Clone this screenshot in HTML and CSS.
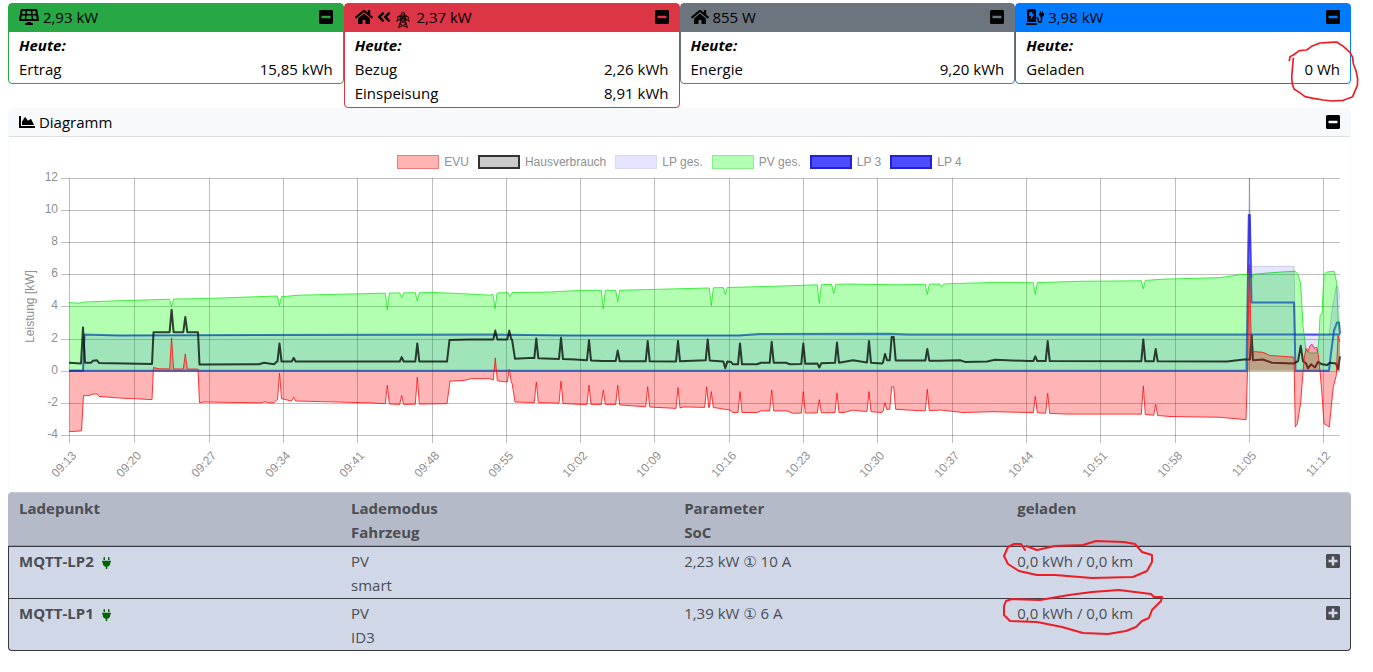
FILE: index.html
```html
<!DOCTYPE html>
<html lang="de">
<head>
    <meta charset="UTF-8">
    <meta name="viewport" content="width=device-width, initial-scale=1.0">
    <title>Energie Übersicht</title>
    <link rel="stylesheet" href="styles.css">
</head>
<body>
    <!-- icon sprites -->
    <svg class="sprites" aria-hidden="true">
        <symbol id="i-minus" viewBox="0 0 448 512"><path d="M400 32H48C21.5 32 0 53.5 0 80v352c0 26.5 21.5 48 48 48h352c26.5 0 48-21.5 48-48V80c0-26.5-21.5-48-48-48zM92 296c-6.6 0-12-5.4-12-12v-56c0-6.6 5.4-12 12-12h264c6.6 0 12 5.4 12 12v56c0 6.6-5.4 12-12 12H92z"/></symbol>
        <symbol id="i-plus" viewBox="0 0 448 512"><path d="M400 32H48C21.5 32 0 53.5 0 80v352c0 26.5 21.5 48 48 48h352c26.5 0 48-21.5 48-48V80c0-26.5-21.5-48-48-48zm-32 252c0 6.6-5.4 12-12 12h-92v92c0 6.6-5.4 12-12 12h-56c-6.6 0-12-5.4-12-12v-92H92c-6.6 0-12-5.4-12-12v-56c0-6.6 5.4-12 12-12h92v-92c0-6.6 5.4-12 12-12h56c6.6 0 12 5.4 12 12v92h92c6.6 0 12 5.4 12 12v56z"/></symbol>
        <symbol id="i-home" viewBox="0 0 576 512"><path d="M280.37 148.26L96 300.11V464a16 16 0 0 0 16 16l112.06-.29a16 16 0 0 0 15.92-16V368a16 16 0 0 1 16-16h64a16 16 0 0 1 16 16v95.64a16 16 0 0 0 16 16.05L464 480a16 16 0 0 0 16-16V300L295.67 148.26a12.19 12.19 0 0 0-15.3 0zM571.6 251.47L488 182.56V44.05a12 12 0 0 0-12-12h-56a12 12 0 0 0-12 12v72.61L318.47 43a48 48 0 0 0-61 0L4.34 251.47a12 12 0 0 0-1.6 16.9l25.5 31A12 12 0 0 0 45.15 301l235.22-193.74a12.19 12.19 0 0 1 15.3 0L530.9 301a12 12 0 0 0 16.9-1.6l25.5-31a12 12 0 0 0-1.7-16.93z"/></symbol>
        <symbol id="i-solar" viewBox="0 0 640 512"><path d="M431.98 448.01l-47.97.05V416h-128v32.21l-47.98.05c-8.82.01-15.97 7.16-15.98 15.99l-.05 31.73c-.01 8.85 7.17 16.03 16.02 16.02l223.96-.26c8.82-.01 15.97-7.16 15.98-15.98l.04-31.73c.01-8.85-7.17-16.03-16.02-16.02zM585.2 26.74C582.58 11.31 568.99 0 553.06 0H86.93C71 0 57.41 11.31 54.79 26.74-3.32 369.16.04 348.08.03 352c-.03 17.32 14.29 32 32.6 32h574.74c18.23 0 32.51-14.56 32.59-31.79.02-4.08 3.35 16.95-54.76-325.47zM259.83 64h120.33l9.77 96H250.06l9.77-96zm-75.17 256H71.09L90.1 208h105.97l-11.41 112zm16.16-160H98.24l16.29-96h96.19l-9.9 96zm32.82 160l11.4-112h149.96l11.4 112H233.64zm195.5-256h96.19l16.29 96H439.17l-10.03-96zm26.06 256l-11.4-112H549.9l19.01 112H455.2z"/></symbol>
        <symbol id="i-left" viewBox="0 0 448 512"><path d="M223.7 239l136-136c9.4-9.4 24.6-9.4 33.9 0l22.6 22.6c9.4 9.4 9.4 24.6 0 33.9L319.9 256l96.4 96.4c9.4 9.4 9.4 24.6 0 33.9L393.7 409c-9.4 9.4-24.6 9.4-33.9 0l-136-136c-9.5-9.4-9.5-24.6-.1-34zm-192 34l136 136c9.4 9.4 24.6 9.4 33.9 0l22.6-22.6c9.4-9.4 9.4-24.6 0-33.9L127.9 256l96.4-96.4c9.4-9.4 9.4-24.6 0-33.9L201.7 103c-9.4-9.4-24.6-9.4-33.9 0l-136 136c-9.5 9.4-9.5 24.6-.1 34z"/></symbol>
        <symbol id="i-tower" viewBox="0 0 16 16"><path fill="none" stroke="currentColor" stroke-width=".9" d="M6 4.500L7 .5h2l1 4M2.500 6.500v-1.500l3.500-2h4l3.500 2v1.500M3 4.800h10M2 10v-2l4-1.500h4l4 1.500v2M2.500 8h11M6 4v4.500L3.500 15.500M10 4v4.500l2.500 7M6 4l4 3.500M10 4L6 7.500M6 8.500l5.500 3.500M10 8.500l-5.500 3.500M4.500 12l8 3.500M11.500 12L3.500 15.500"/></symbol>
        <symbol id="i-station" viewBox="0 0 576 512"><path d="M336 448H16c-8.84 0-16 7.16-16 16v32c0 8.84 7.16 16 16 16h320c8.84 0 16-7.16 16-16v-32c0-8.84-7.16-16-16-16zm208-320V80c0-8.84-7.16-16-16-16s-16 7.16-16 16v48h-32V80c0-8.84-7.16-16-16-16s-16 7.16-16 16v48h-16c-8.84 0-16 7.16-16 16v32c0 35.76 23.62 65.69 56 75.93v118.49c0 13.95-9.5 26.92-23.26 29.19C431.22 402.5 416 387.99 416 370v-28c0-48.6-39.4-88-88-88h-8V64c0-35.35-28.65-64-64-64H96C60.65 0 32 28.65 32 64v352h288V304h8c22.09 0 40 17.91 40 40v24.61c0 39.67 28.92 75.16 68.41 79.01C481.71 452.05 520 416.41 520 372V251.93c32.38-10.24 56-40.17 56-75.93v-32c0-8.84-7.16-16-16-16h-16zm-283.91 47.76l-93.7 139c-2.2 3.33-6.21 5.24-10.39 5.24-7.67 0-13.47-6.28-11.67-12.92L167.35 224H108c-7.25 0-12.85-5.59-11.89-11.89l16-107C112.9 99.9 117.98 96 124 96h68c7.88 0 13.62 6.54 11.6 13.26L192 160h57.7c9.24 0 15.01 8.78 10.39 15.76z"/></symbol>
        <symbol id="i-area" viewBox="0 0 512 512"><path d="M500 384c6.600 0 12 5.400 12 12v40c0 6.600-5.400 12-12 12H12c-6.600 0-12-5.400-12-12V76c0-6.600 5.400-12 12-12h40c6.600 0 12 5.400 12 12v308h436zM372.700 159.500L288 216l-85.300-113.700c-5.100-6.800-15.500-6.300-19.900 1L96 248v104h384l-89.900-187.800c-3.200-6.500-11.400-8.700-17.400-4.700z"/></symbol>
        <symbol id="i-plug" viewBox="0 0 384 512"><path d="M320 32a32 32 0 0 0-64 0v96h64zM368 160H16a16 16 0 0 0-16 16v32a16 16 0 0 0 16 16h16v32a160 160 0 0 0 128 156.800V512h64v-99.200A160 160 0 0 0 352 256v-32h16a16 16 0 0 0 16-16v-32a16 16 0 0 0-16-16zM128 32a32 32 0 0 0-64 0v96h64z"/></symbol>
    </svg>

    <main class="dashboard">
        <div class="cards">
            <section class="card card-pv">
                <div class="card-header">
                    <span><svg class="icon icon-solar"><use href="#i-solar"/></svg> 2,93 kW</span>
                    <button class="toggle" aria-label="PV einklappen"><svg class="icon"><use href="#i-minus"/></svg></button>
                </div>
                <div class="card-body">
                    <div class="today">Heute:</div>
                    <div class="line"><span>Ertrag</span><span>15,85 kWh</span></div>
                </div>
            </section>
            <section class="card card-evu">
                <div class="card-header">
                    <span><svg class="icon icon-wide"><use href="#i-home"/></svg> <svg class="icon"><use href="#i-left"/></svg> <svg class="icon icon-tower"><use href="#i-tower"/></svg> 2,37 kW</span>
                    <button class="toggle" aria-label="EVU einklappen"><svg class="icon"><use href="#i-minus"/></svg></button>
                </div>
                <div class="card-body">
                    <div class="today">Heute:</div>
                    <div class="line"><span>Bezug</span><span>2,26 kWh</span></div>
                    <div class="line"><span>Einspeisung</span><span>8,91 kWh</span></div>
                </div>
            </section>
            <section class="card card-home">
                <div class="card-header">
                    <span><svg class="icon icon-wide"><use href="#i-home"/></svg> 855 W</span>
                    <button class="toggle" aria-label="Hausverbrauch einklappen"><svg class="icon"><use href="#i-minus"/></svg></button>
                </div>
                <div class="card-body">
                    <div class="today">Heute:</div>
                    <div class="line"><span>Energie</span><span>9,20 kWh</span></div>
                </div>
            </section>
            <section class="card card-lp">
                <div class="card-header">
                    <span><svg class="icon icon-wide"><use href="#i-station"/></svg> 3,98 kW</span>
                    <button class="toggle" aria-label="Ladepunkte einklappen"><svg class="icon"><use href="#i-minus"/></svg></button>
                </div>
                <div class="card-body">
                    <div class="today">Heute:</div>
                    <div class="line">
                        <span>Geladen</span>
                        <span class="marked">0 Wh
                            <svg class="mark mark-total" viewBox="834 120 216 192"><path d="M850 178L848 200L845 235L847 255L852 270L868 280L885 293L910 298L940 303L965 306L1000 304L1028 293L1033 280L1042 260L1043 240L1038 215L1030 195L1028 175L1020 160L1000 142L980 129L960 130L930 132L905 142L890 153L868 155L850 168L840 173L838 185"/></svg>
                        </span>
                    </div>
                </div>
            </section>
        </div>

        <section class="card card-chart">
            <div class="card-header">
                <span><svg class="icon icon-area"><use href="#i-area"/></svg> Diagramm</span>
                <button class="toggle" aria-label="Diagramm einklappen"><svg class="icon"><use href="#i-minus"/></svg></button>
            </div>
            <ul class="legend">
                <li><i class="swatch swatch-evu"></i>EVU</li>
                <li><i class="swatch swatch-home"></i>Hausverbrauch</li>
                <li><i class="swatch swatch-total"></i>LP ges.</li>
                <li><i class="swatch swatch-pv"></i>PV ges.</li>
                <li><i class="swatch swatch-lp"></i>LP 3</li>
                <li><i class="swatch swatch-lp"></i>LP 4</li>
            </ul>
            <svg class="chart" id="chart" viewBox="0 0 1341 322"></svg>
        </section>

        <table class="points">
            <thead>
                <tr>
                    <th>Ladepunkt</th>
                    <th>Lademodus<br>Fahrzeug</th>
                    <th>Parameter<br>SoC</th>
                    <th>geladen</th>
                </tr>
            </thead>
            <tbody>
                <tr>
                    <td><b>MQTT-LP2</b> <svg class="icon icon-plug"><use href="#i-plug"/></svg></td>
                    <td>PV<br>smart</td>
                    <td>2,23 kW ① 10 A</td>
                    <td>
                        <div class="line">
                            <span class="marked">0,0 kWh / 0,0 km
                                <svg class="mark mark-row" viewBox="0 0 168 50"><path d="M25 15L21 9L14 9L8 12L4 21L8 29L19 36L37 40L55 40L92 43L133 42L147 36L152 27L152 20L142 17L135 9L124 7L96 6L83 10L55 11L37 15L26 11"/></svg>
                            </span>
                            <button class="toggle" aria-label="MQTT-LP2 ausklappen"><svg class="icon"><use href="#i-plus"/></svg></button>
                        </div>
                    </td>
                </tr>
                <tr>
                    <td><b>MQTT-LP1</b> <svg class="icon icon-plug"><use href="#i-plug"/></svg></td>
                    <td>PV<br>ID3</td>
                    <td>1,39 kW ① 6 A</td>
                    <td>
                        <div class="line">
                            <span class="marked">0,0 kWh / 0,0 km
                                <svg class="mark mark-row" viewBox="0 0 168 50"><path d="M40 13L12 12L6 14L4 19L4 28L10 34L37 35L62 40L83 46L108 47L126 44L136 40L142 34L149 31L152 23L161 14L162 10L154 10L151 7L119 3L92 5L69 8L40 13"/></svg>
                            </span>
                            <button class="toggle" aria-label="MQTT-LP1 ausklappen"><svg class="icon"><use href="#i-plus"/></svg></button>
                        </div>
                    </td>
                </tr>
            </tbody>
        </table>
    </main>

    <script src="chart.js"></script>
</body>
</html>
```
FILE: styles.css
```css
* {
    box-sizing: border-box;
}

body {
    margin: 0;
    background-color: #fff;
    color: #000;
    font-family: "Open Sans", "DejaVu Sans", sans-serif;
    font-size: 15px;
    line-height: 24px;
}

.dashboard {
    padding: 3px 22px 20px 8px;
}

.sprites {
    display: none;
}

/* Icons */
.icon {
    width: 14px;
    height: 16px;
    fill: currentColor;
    vertical-align: -2px;
}

.icon-solar {
    width: 20px;
}

.icon-wide {
    width: 18px;
}

.icon-area {
    width: 16px;
}

.icon-tower {
    width: 16px;
    margin-right: 2px;
    vertical-align: -5px;
}

.icon-plug {
    width: 9px;
    height: 12px;
    margin-left: 4px;
    color: #006400;
}

.toggle {
    display: flex;
    align-items: center;
    padding: 0;
    border: none;
    background: none;
    color: inherit;
    cursor: pointer;
}

/* Cards */
.cards {
    display: grid;
    grid-template-columns: repeat(4, 1fr);
    align-items: start;
}

.card {
    border: 1px solid;
    border-radius: 4px;
}

.card-header {
    display: flex;
    justify-content: space-between;
    padding: 1px 10px 3px;
}

.card-body {
    padding: 1px 10px 2px;
}

.card-pv {
    border-color: #28a745;
}

.card-pv .card-header {
    background-color: #28a745;
}

.card-evu {
    border-color: #dc3545;
}

.card-evu .card-header {
    background-color: #dc3545;
}

.card-home {
    border-color: #6c757d;
}

.card-home .card-header {
    background-color: #6c757d;
}

.card-lp {
    border-color: #007bff;
}

.card-lp .card-header {
    background-color: #007bff;
}

.today {
    font-weight: bold;
    font-style: italic;
}

.line {
    display: flex;
    justify-content: space-between;
    height: 24px;
}

/* Red marker strokes over the values */
.marked {
    position: relative;
}

.mark {
    position: absolute;
    fill: none;
    stroke: #ed1c24;
    stroke-width: 2;
    stroke-linejoin: round;
    stroke-linecap: round;
    pointer-events: none;
}

.mark-total {
    right: -20px;
    top: -18px;
    width: 72px;
    height: 64px;
    stroke-width: 5;
}

.mark-row {
    left: -17px;
    top: -14px;
    width: 168px;
    height: 50px;
}

/* Diagram */
.card-chart {
    border-color: #f8f9fa;
}

.card-chart .card-header {
    padding-bottom: 2px;
    background-color: #f8f9fa;
    border-bottom: 1px solid #dfdfdf;
}

.legend {
    display: flex;
    justify-content: center;
    gap: 9px;
    margin: 0;
    padding: 18px 0 0;
    list-style: none;
    color: #8f8f8f;
    font-family: "Liberation Sans", Arial, sans-serif;
    font-size: 12px;
    line-height: 14px;
}

.legend li {
    display: flex;
    gap: 5px;
}

.swatch {
    width: 42px;
    height: 14px;
    border: 1px solid;
}

.swatch-evu {
    background-color: #ffb3b3;
    border-color: #f27878;
}

.swatch-home {
    background-color: #cbcbcb;
    border: 2px solid #333;
}

.swatch-total {
    background-color: #e5e5ff;
    border-color: #d9d9f2;
}

.swatch-pv {
    background-color: #b3ffb3;
    border-color: #8af08a;
}

.swatch-lp {
    background-color: #4d4dff;
    border: 2px solid #2222d4;
}

.chart {
    display: block;
    width: 100%;
    font-family: "Liberation Sans", Arial, sans-serif;
    font-size: 12px;
}

.chart text {
    fill: #8f8f8f;
    text-anchor: end;
}

.chart .axis-title {
    text-anchor: middle;
}

.grid {
    fill: none;
    stroke: #000;
    stroke-opacity: 0.25;
    shape-rendering: crispEdges;
}

.series {
    fill: none;
    stroke-linejoin: round;
}

.series-lp {
    stroke: #0000ff;
    stroke-opacity: 0.7;
    stroke-width: 2;
}

.series-pv {
    stroke: #00e600;
    stroke-opacity: 0.7;
}

.series-total {
    stroke: #00005a;
    stroke-opacity: 0.15;
}

.series-home {
    stroke: #000;
    stroke-opacity: 0.75;
    stroke-width: 2;
}

.series-evu {
    stroke: #ff0a0d;
    stroke-opacity: 0.8;
}

.area-pv {
    fill: #00ff00;
    fill-opacity: 0.3;
}

.area-total {
    fill: #0000ff;
    fill-opacity: 0.1;
}

.area-evu {
    fill: #ff0a0d;
    fill-opacity: 0.3;
}

/* Charge points */
.points {
    width: 100%;
    border-collapse: separate;
    border-spacing: 0;
    table-layout: fixed;
    color: #4b4d52;
}

.points th,
.points td {
    padding: 2px 10px 1px;
    text-align: left;
    vertical-align: top;
}

.points th {
    padding-top: 3px;
    background-color: #b5bac9;
    border-top: 1px solid #c4c8d3;
    border-bottom: 1px solid #999da6;
}

.points th:not(:last-child) {
    width: 24.8%;
}

.points td {
    background-color: #d0d8e8;
    border-bottom: 1px solid #343a40;
}

.points tbody tr:first-child td {
    border-top: 1px solid #343a40;
}

.points td:first-child {
    border-left: 1px solid #343a40;
}

.points td:last-child {
    border-right: 1px solid #343a40;
}

.points th:first-child {
    border-top-left-radius: 4px;
    padding-left: 11px;
}

.points th:last-child {
    border-top-right-radius: 4px;
}

.points tr:last-child td:first-child {
    border-bottom-left-radius: 4px;
}

.points tr:last-child td:last-child {
    border-bottom-right-radius: 4px;
}
```
FILE: chart.js
```js
const svg = document.getElementById('chart');

// Plot area inside the svg
const left = 60;
const right = 1331;
const top12 = 9;
const perKw = 16.06;
const zero = top12 + 12 * perKw;

const times = ['09:13', '09:20', '09:27', '09:34', '09:41', '09:48', '09:55', '10:02', '10:09',
    '10:16', '10:23', '10:30', '10:37', '10:44', '10:51', '10:58', '11:05', '11:12'];

// Base curves as [x, kW]
const pv = [[0, 4.25], [10, 4.2], [15, 4.28], [45, 4.35], [98, 4.45], [140, 4.5], [208, 4.65], [215, 4.62], [230, 4.7],
    [315, 4.83], [365, 4.87], [400, 4.78], [421, 4.7], [430, 4.85], [481, 4.9], [511, 5], [548, 5], [638, 5.15],
    [700, 5.25], [748, 5.35], [778, 5.4], [831, 5.35], [870, 5.4], [924, 5.5], [966, 5.48], [1011, 5.57], [1071, 5.6],
    [1094, 5.7], [1151, 5.8], [1173, 6], [1180, 6], [1182, 5.6], [1184, 6], [1201, 6.1], [1226, 6.2], [1229, 6],
    [1231.7, 5.4], [1234, 2.8], [1236.7, 1.4], [1238, 1.2], [1242, 1.1], [1246, 1.1], [1248.7, 1.2], [1250, 2],
    [1251, 3.4], [1253, 3.6], [1255, 6], [1258, 6.15], [1265, 6.2], [1267.7, 5.5], [1269.3, 3], [1271, 2.2]];
const pvSpikes = [[102.6, 4], [210.5, 4.05], [318.3, 3.8], [332.7, 4.55], [348.3, 4.35], [426, 3.85], [441, 4.6],
    [534.3, 3.85], [548.7, 4.3], [642.3, 4.05], [656.3, 4.75], [750.3, 4.2], [764.7, 4.8], [858.3, 4.75],
    [872.7, 5.2], [966.3, 4.75], [1074.3, 5.1]];

const evu = [[0, -3.8], [12.5, -3.75], [14.5, -1.55], [20, -1.55], [24, -1.45], [28, -1.45], [30, -1.6], [50, -1.7],
    [83, -1.8], [84.5, 0.2], [90, 0.12], [129, 0.1], [130.5, -2], [135, -1.95], [192, -2], [196, -1.93], [200, -2],
    [205, -2], [208, -1.8], [213, -1.75], [222, -1.88], [300, -2], [330, -2.1], [378, -2.05], [381, -0.65], [395, -0.6],
    [402, -0.5], [421, -0.5], [425, -0.6], [443, -0.75], [446, -1.95], [481, -2], [511, -2.1], [545, -2.1],
    [578, -2.25], [609, -2.35], [615, -2.25], [646, -2.3], [661, -2.45], [664, -2.6], [688, -2.6], [692, -2.5],
    [718, -2.5], [724, -2.65], [775, -2.6], [784, -2.45], [790, -2.5], [812, -2.6], [819, -2.4], [827, -2.4],
    [854, -2.5], [872, -2.45], [894, -2.6], [924, -2.55], [960, -2.6], [998, -2.7], [1071, -2.7], [1101, -2.85],
    [1151, -2.9], [1177, -3.05], [1178.5, 0], [1180.3, 6.6], [1182.5, 1.2], [1194, 1.15], [1201, 0.95],
    [1225, 0.85], [1226.3, -3.5], [1228.3, -3.3], [1231.7, -2], [1233.7, -0.3], [1235.3, 0.8], [1237, 1.4],
    [1239, 1.2], [1241, 1.55], [1243, 1.65], [1245.3, 1.4], [1247.7, 1.45], [1249.3, 1], [1251, 0], [1253, -1.5],
    [1255, -3.3], [1257.7, -3.4], [1260.3, -3.5], [1262.3, -2.2], [1264.3, -1], [1267.3, -0.3], [1269, 2.2], [1271, 1.8]];
const evuSpikes = [[102.6, 2.05], [116.3, 1.05], [210.5, -0.15], [224.7, -1.65], [318.3, -0.9], [332.7, -1.55],
    [348.3, -0.4], [426.3, 0.8], [440.3, 0.1], [467.3, -0.7], [492, -0.65], [520, -0.9], [534.3, -1.2],
    [548.7, -0.9], [578.7, -1], [609, -1.05], [637.7, -1], [642.3, -1.3], [671, -1.3], [702.7, -1.2], [734.3, -1.3],
    [750.3, -1.8], [768, -1.4], [800, -1.3], [816, -2], [823.7, -1, 1], [858.3, -1.15], [966.3, -1.6],
    [978.7, -1.4], [1074.3, -0.95], [1086.7, -2.1]];

const home = [[0, 0.5], [12, 0.45], [14, 2.7], [16, 0.5], [22, 0.5], [24, 0.62], [28, 0.65], [30, 0.48], [83, 0.42],
    [84.5, 2.4], [129, 2.4], [130.5, 0.38], [190, 0.4], [195, 0.5], [205, 0.4], [208, 0.58], [378, 0.57],
    [380.5, 1.92], [401, 1.95], [443, 1.95], [446, 0.75], [460, 0.8], [506, 0.7], [533, 0.6], [609, 0.58],
    [638, 0.65], [662, 0.55], [664, 0.4], [688, 0.4], [692, 0.5], [717, 0.5], [721, 0.4], [770, 0.5], [784, 0.65],
    [800, 0.5], [813, 0.45], [816, 0.65], [870, 0.62], [891, 0.65], [896, 0.55], [918, 0.58], [926, 0.68],
    [960, 0.6], [1158, 0.58], [1175, 0.7], [1181, 0.7], [1182.7, 2.2], [1184, 0.65], [1194, 0.7], [1203, 0.5],
    [1225, 0.45], [1229, 0.6], [1231.7, 1.55], [1234, 0.6], [1237, 0.45], [1239, 0.15], [1242, 0.4], [1246, 0.2],
    [1249, 0.55], [1253, 0.4], [1258, 0.35], [1261, 0.5], [1267, 0.45], [1269, 0.1], [1271, 0.9]];
const homeSpikes = [[102.6, 3.8], [116.3, 3.35], [210.5, 1.7], [224.7, 0.8], [332.7, 0.85], [348.3, 1.7],
    [426.3, 2.5], [440.3, 2.5], [467.3, 2], [492, 2.05], [520, 1.9], [548.7, 1.25], [578.7, 1.85], [609, 1.85],
    [638.7, 1.95], [656.3, 0.15], [671, 1.7], [702.7, 1.8], [734.3, 1.7], [750.3, 0.2], [768, 1.75], [800, 1.85],
    [816, 1.05], [823.7, 2.1, 1], [858.3, 1.35], [966.3, 0.9], [978.7, 1.85], [1074.3, 1.95], [1086.7, 1.35]];

const lp3 = [[0, 0], [14, 0], [15.5, 2.25], [50, 2.2], [420, 2.25], [500, 2.2], [670, 2.2], [690, 2.28], [820, 2.3],
    [840, 2.25], [1271, 2.25]];
const lp4 = [[0, 0], [1177.5, 0], [1179.8, 9.7], [1180.8, 9.7], [1182.5, 4.25], [1225, 4.25], [1226.5, 0], [1260, 0],
    [1262, 1.1], [1265, 2.5], [1268, 3], [1270, 3], [1271, 2.3]];
const total = [[0, 0], [14, 0], [15.5, 2.2], [1178, 2.2], [1180.3, 12], [1182.5, 6.5], [1225, 6.5], [1226.5, 2.2],
    [1260, 2.2], [1263, 3.8], [1267, 5.2], [1269, 5.3], [1271, 4.5]];

// Value of a curve at x
function valueAt(points, x) {
    const i = points.findIndex(p => p[0] >= x);
    if (i <= 0) return points[0][1];
    const [x0, y0] = points[i - 1];
    const [x1, y1] = points[i];
    return y0 + (y1 - y0) * (x - x0) / (x1 - x0);
}

// Put short peaks [x, kW, half width of the top] on a base curve
function addSpikes(points, spikes) {
    let result = points.slice();
    spikes.forEach(([x, kw, flat = 0]) => {
        const from = x - 2 - flat;
        const to = x + 2 + flat;
        result = result.filter(p => p[0] < from || p[0] > to);
        result.push([from, valueAt(points, from)], [x - flat, kw], [x + flat, kw], [to, valueAt(points, to)]);
    });
    return result.sort((a, b) => a[0] - b[0]);
}

function toPath(points) {
    return 'M' + points.map(([x, kw]) => (left + x).toFixed(1) + ' ' + (zero - kw * perKw).toFixed(1)).join('L');
}

function addPath(className, d) {
    return `<path class="${className}" d="${d}"/>`;
}

function addArea(className, points) {
    return addPath(className, toPath(points) + `L${right} ${zero}L${left} ${zero}Z`);
}

function drawChart() {
    const bottom = Math.round(zero + 4 * perKw);
    let out = '';

    // Horizontal grid with kW labels
    for (let kw = 12; kw >= -4; kw -= 2) {
        const y = Math.round(zero - kw * perKw);
        out += addPath('grid', `M${left - 8} ${y}H${right}`);
        out += `<text x="${left - 11}" y="${y + 3}">${kw}</text>`;
    }

    // Vertical grid with time labels
    times.forEach((time, i) => {
        const x = i === 0 ? left : Math.round(left - 9 + i * 74.3);
        out += addPath('grid', `M${x} ${top12}V${bottom + 8}`);
        out += `<text transform="translate(${x + 8} ${bottom + 21}) rotate(-47)">${time}</text>`;
    });

    out += `<text class="axis-title" transform="translate(25 ${zero - 4 * perKw}) rotate(-90)">Leistung [kW]</text>`;

    const pvCurve = addSpikes(pv, pvSpikes);
    const evuCurve = addSpikes(evu, evuSpikes);

    out += addPath('series series-lp', toPath(lp4));
    out += addPath('series series-lp', toPath(lp3));
    out += addArea('area-pv', pvCurve);
    out += addPath('series series-pv', toPath(pvCurve));
    out += addArea('area-total', total);
    out += addPath('series series-total', toPath(total));
    out += addPath('series series-home', toPath(addSpikes(home, homeSpikes)));
    out += addArea('area-evu', evuCurve);
    out += addPath('series series-evu', toPath(evuCurve));

    svg.innerHTML = out;
}

drawChart();
```
